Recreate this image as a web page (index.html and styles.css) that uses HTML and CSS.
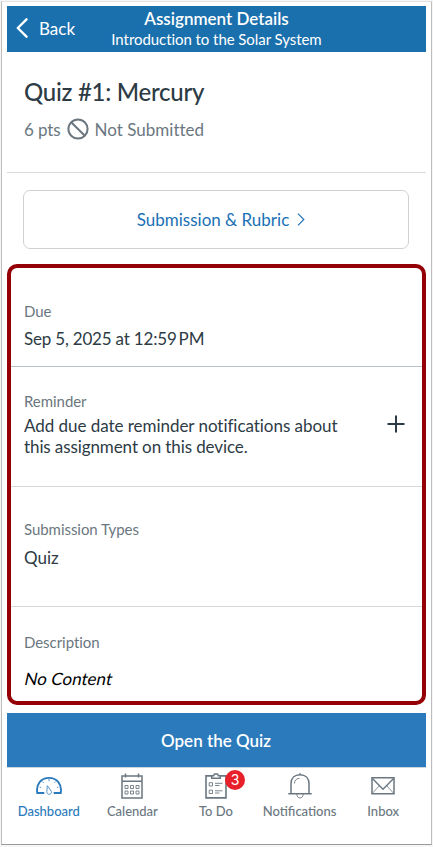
FILE: index.html
```html
<!DOCTYPE html>
<html lang="en">
<head>
<meta charset="utf-8">
<title>Assignment Details</title>
<link rel="stylesheet" href="styles.css">
</head>
<body>
<div class="phone">
  <header class="nav">
    <a class="back">
      <svg width="12" height="20" viewBox="0 0 12 20" fill="none" stroke="#fff" stroke-width="2.4" stroke-linecap="round" stroke-linejoin="round"><path d="M10.5 1.3 1.8 10l8.7 8.7"/></svg>
      <span>Back</span>
    </a>
    <div class="heading">
      <div><span class="nav-title">Assignment Details</span></div>
      <div><span class="nav-sub">Introduction to the Solar System</span></div>
    </div>
  </header>

  <section class="summary">
    <h1><span class="name">Quiz #1: Mercury</span></h1>
    <div class="status">
      <span class="pts">6 pts</span>
      <svg width="22" height="22" viewBox="0 0 22 22" fill="none" stroke="#6b7780" stroke-width="2"><circle cx="11" cy="11" r="9.6"/><path d="m4.2 4.2 13.6 13.6"/></svg>
      <span class="state">Not Submitted</span>
    </div>
  </section>

  <a class="rubric">
    <span class="rubric-text">Submission &amp; Rubric</span>
    <svg width="8" height="13" viewBox="0 0 8 13" fill="none" stroke="#2573b8" stroke-width="1.2"><path d="m1 .7 5.8 5.8L1 12.3"/></svg>
  </a>

  <main class="details">
    <section class="row due">
      <div class="label"><span class="l-due">Due</span></div>
      <div class="value"><span class="v-due">Sep 5, 2025 at 12:59&#8202;<span class="pm">PM</span></span></div>
    </section>
    <section class="row reminder">
      <div>
        <div class="label"><span class="l-rem">Reminder</span></div>
        <div class="value"><span class="v-rem1">Add due date reminder notifications about</span><br><span class="v-rem2">this assignment on this device.</span></div>
      </div>
      <svg class="plus" width="18" height="18" viewBox="0 0 18 18" fill="none" stroke="#2d3b45" stroke-width="2"><path d="M9 .5v17M.5 9h17"/></svg>
    </section>
    <section class="row types">
      <div class="label"><span class="l-types">Submission Types</span></div>
      <div class="value"><span class="v-types">Quiz</span></div>
    </section>
    <section class="row description">
      <div class="label"><span class="l-desc">Description</span></div>
      <div class="value empty"><span class="v-desc">No Content</span></div>
    </section>
  </main>

  <button class="open"><span class="open-text">Open the Quiz</span></button>

  <nav class="tabs">
    <a class="tab active">
      <svg width="26" height="26" viewBox="0 0 26 26" fill="none" stroke="#2b7abc"><path d="M8.300 20H1.300C-.3 11 5.200 4.900 13 4.900S26.300 11 24.700 20h-7" stroke-width="1.900"/><path d="M13 6v2.200M6.500 8.600l1 1.200M19.500 8.600l-1 1.200M3.600 14l1.500.6M22.400 14l-1.500.6" stroke-width=".8"/><path d="m11.300 12.700-.5 6.100c0 3.200 4.400 3.200 4.700.5 0-1.100-1.500-3.100-4.200-6.600Z" stroke-width=".8"/></svg>
      <span class="t-dash">Dashboard</span>
    </a>
    <a class="tab">
      <svg width="26" height="26" viewBox="0 0 26 26" fill="none" stroke="#6b7780"><path d="M3 2.900h20v22H3zM3 8.300h20" stroke-width="1.500"/><path d="M6.500.4v4M19.500.4v4" stroke-width="1.500"/><path d="M6 12.500h3v3H6zm5.500 0h3v3h-3zm5.500 0h3v3h-3zM6 18h3v3H6zm5.500 0h3v3h-3zM17 18h3v3h-3z" stroke-width=".9"/></svg>
      <span class="t-cal">Calendar</span>
    </a>
    <a class="tab">
      <svg width="26" height="26" viewBox="0 0 26 26" fill="none" stroke="#6b7780"><path d="M8 2.900H3v22h20v-22h-5" stroke-width="1.600"/><path d="M8.700 5.200V2.700h2l.7-1.700h3.200l.7 1.700h2v2.500z" stroke-width="1.500"/><path d="M6.200 9.700h3.300V13H6.200zm0 7.500h3.300v3.300H6.200zM12 10.300h7.500M12 12.500h4.500M12 17.800h7.500M12 20h4.500" stroke-width=".9"/></svg>
      <span class="badge">3</span>
      <span class="t-todo">To Do</span>
    </a>
    <a class="tab">
      <svg width="26" height="26" viewBox="0 0 26 26" fill="none" stroke="#6b7780"><path d="M1.300 20.800h23.400M4 20.500V10.800c0-5.700 3.700-9 9-9s9 3.300 9 9v9.700M13 .2v1.600" stroke-width="1.500"/><path d="M7.500 10.500c0-3 1.700-5 5-5.200M9.800 21c0 5.300 6.400 5.300 6.400 0" stroke-width=".9"/></svg>
      <span class="t-not">Notifications</span>
    </a>
    <a class="tab">
      <svg width="26" height="26" viewBox="0 0 26 26" fill="none" stroke="#6b7780"><path d="M2 4.700h22v16H2z" stroke-width="1.500"/><path d="m2.200 5.200 10.800 11L23.800 5.200" stroke-width="1.400"/><path d="m2.200 20.500 7.300-8M23.800 20.500l-7.300-8" stroke-width=".8"/></svg>
      <span class="t-inbox">Inbox</span>
    </a>
  </nav>
</div>
</body>
</html>
```
FILE: styles.css
```css
* { box-sizing: border-box; }
body {
  margin: 0;
  padding: 1px 1px 2px;
  height: 847px;
  background: #f6f6f6;
  font-family: Lato, "Liberation Sans", sans-serif;
  color: #2d3b45;
}
.phone {
  height: 844px;
  padding: 4px 5px 0;
  border: 1px solid #bdbdbd;
  border-top-color: #e3e3e3;
  border-bottom-color: #999;
  background: #fff;
  display: flex;
  flex-direction: column;
}
span { white-space: nowrap; }
.nav {
  height: 46px;
  flex: none;
  display: grid;
  grid-template-columns: 72px 1fr 72px;
  background: #1a70ad;
  color: #fff;
}
.back {
  display: flex;
  align-items: center;
  gap: 11px;
  padding: 0 0 2px 9px;
  font-size: 17px;
}
.heading { text-align: center; padding-top: 3px; line-height: 20px; }
.nav-title { font-size: 17px; font-weight: 600; }
.nav-sub { font-size: 15px; letter-spacing: -.06px; }
.summary {
  height: 121px;
  flex: none;
  padding: 26px 17px 0;
  border-bottom: 1px solid #d9dcde;
}
h1 { margin: 0; font-size: 24px; line-height: 28px; font-weight: 500; letter-spacing: -.27px; }
.status {
  display: flex;
  align-items: center;
  gap: 6px;
  margin-top: 12px;
  height: 22px;
  font-size: 17px;
  color: #6b7780;
}
.pts { letter-spacing: -.1px; }
.state { letter-spacing: .01px; }
.rubric {
  flex: none;
  height: 59px;
  margin: 17px 17px 0 16px;
  border: 1px solid #cdd1d4;
  border-radius: 7px;
  display: flex;
  align-items: center;
  justify-content: center;
  gap: 8px;
  padding-left: 10px;
  font-size: 17px;
  color: #1a70b5;
}
.details {
  flex: none;
  height: 441px;
  margin-top: 15px;
  border: 4px solid #940005;
  border-radius: 10px;
}
.row { padding: 0 13px; border-bottom: 1px solid #d6d9db; }
.label { font-size: 15px; line-height: 20px; color: #6b7780; letter-spacing: -.05px; }
.value { font-size: 17px; line-height: 21px; letter-spacing: -.04px; }
.due { height: 99px; padding-top: 33px; border-color: #b9c0c6; }
.types .value { margin-top: 8px; }
.due .value { margin-top: 7px; }
.v-due { letter-spacing: -.19px; }
.pm { margin-left: 1px; letter-spacing: 0; }
.reminder {
  height: 120px;
  padding-top: 24px;
  display: flex;
  justify-content: space-between;
}
.reminder .value { margin-top: 4px; }
.v-rem2 { letter-spacing: -.1px; }
.plus { margin: 24px 4px 0 0; }
.types { height: 120px; padding-top: 32px; }
.description { padding-top: 25px; border: 0; }
.description .value { margin-top: 16px; }
.empty { color: #000; }
.v-desc { display: inline-block; transform: skewX(-12deg); margin-left: 1px; letter-spacing: 0; }
.open {
  flex: none;
  height: 54px;
  margin-top: 8px;
  padding: 0 1px 0 0;
  border: 0;
  background: #2b7abc;
  color: #fff;
  font: 600 17px Lato, sans-serif;
}
.tabs {
  display: grid;
  grid-template-columns: repeat(5, 1fr);
  height: 60px;
  padding-right: 1px;
  border-top: 1px solid #ccd5dc;
}
.tab {
  position: relative;
  display: flex;
  flex-direction: column;
  align-items: center;
  padding-top: 5px;
  font-size: 13px;
  font-weight: 500;
  line-height: 16px;
  gap: 4px;
  color: #6b7780;
}
.active { color: #2b7abc; }
.badge {
  position: absolute;
  left: 51px;
  top: 2px;
  width: 20px;
  height: 20px;
  border-radius: 50%;
  background: #e8202a;
  color: #fff;
  font: 14px/20px Inter, sans-serif;
  text-align: center;
}
```
